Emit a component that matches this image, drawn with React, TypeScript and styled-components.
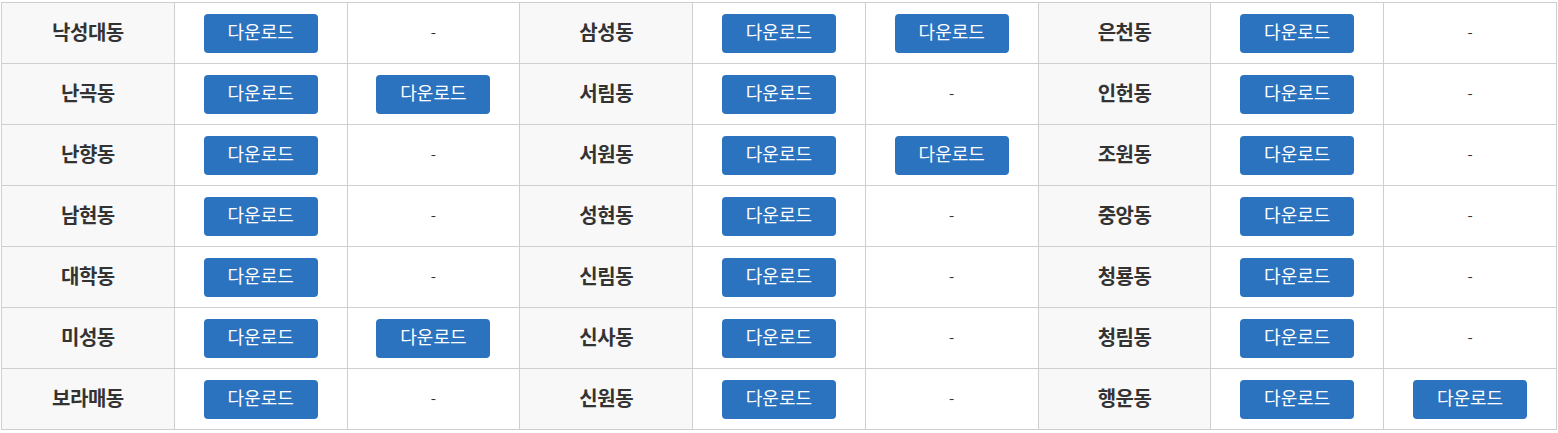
import { createGlobalStyle, styled } from "styled-components";

const GlobalStyle = createGlobalStyle`
  body {
    margin: 0;
    font-family: "Noto Sans CJK KR", "Noto Sans", sans-serif;
    background: #fff;
  }
`;

type Entry = { name: string; files: number };

const rows: Entry[][] = [
  [
    { name: "낙성대동", files: 1 },
    { name: "삼성동", files: 2 },
    { name: "은천동", files: 1 },
  ],
  [
    { name: "난곡동", files: 2 },
    { name: "서림동", files: 1 },
    { name: "인헌동", files: 1 },
  ],
  [
    { name: "난향동", files: 1 },
    { name: "서원동", files: 2 },
    { name: "조원동", files: 1 },
  ],
  [
    { name: "남현동", files: 1 },
    { name: "성현동", files: 1 },
    { name: "중앙동", files: 1 },
  ],
  [
    { name: "대학동", files: 1 },
    { name: "신림동", files: 1 },
    { name: "청룡동", files: 1 },
  ],
  [
    { name: "미성동", files: 2 },
    { name: "신사동", files: 1 },
    { name: "청림동", files: 1 },
  ],
  [
    { name: "보라매동", files: 1 },
    { name: "신원동", files: 1 },
    { name: "행운동", files: 2 },
  ],
];

function App() {
  return (
    <>
      <GlobalStyle />
      <Wrap>
        <Table>
          <tbody>
            {rows.map((row, i) => (
              <tr key={i}>
                {row.map((e) => [
                  <NameCell key={e.name}>{e.name}</NameCell>,
                  <Cell key={e.name + "1"}>
                    <DownloadButton>다운로드</DownloadButton>
                  </Cell>,
                  e.files > 1 ? (
                    <Cell key={e.name + "2"}>
                      <DownloadButton>다운로드</DownloadButton>
                    </Cell>
                  ) : (
                    <DashCell key={e.name + "2"}>-</DashCell>
                  ),
                ])}
              </tr>
            ))}
          </tbody>
        </Table>
      </Wrap>
    </>
  );
}

export default App;

const Wrap = styled.div`
  padding: 2px 1px 0 1px;
`;

const Table = styled.table`
  width: 100%;
  border-collapse: collapse;
  table-layout: fixed;
  tr {
    height: 61px;
  }
`;

const Cell = styled.td`
  border: 1px solid #cfcfcf;
  text-align: center;
  vertical-align: middle;
  padding: 0;
  height: 60px;
  box-sizing: border-box;
`;

const NameCell = styled(Cell)`
  background: #f8f8f8;
  font-weight: bold;
  font-size: 20px;
  color: #333;
  letter-spacing: -0.5px;
  padding-bottom: 3px;
`;

const DashCell = styled(Cell)`
  font-size: 15px;
  color: #333;
  padding-bottom: 4px;
`;

const DownloadButton = styled.button`
  width: 114px;
  height: 39px;
  border: none;
  border-radius: 4px;
  background: #2b72bf;
  color: #fff;
  font-family: "Noto Sans CJK KR", "Noto Sans", sans-serif;
  font-size: 18px;
  padding: 0 0 5px;
  cursor: pointer;
  display: block;
  margin: 1px auto 0;
`;
